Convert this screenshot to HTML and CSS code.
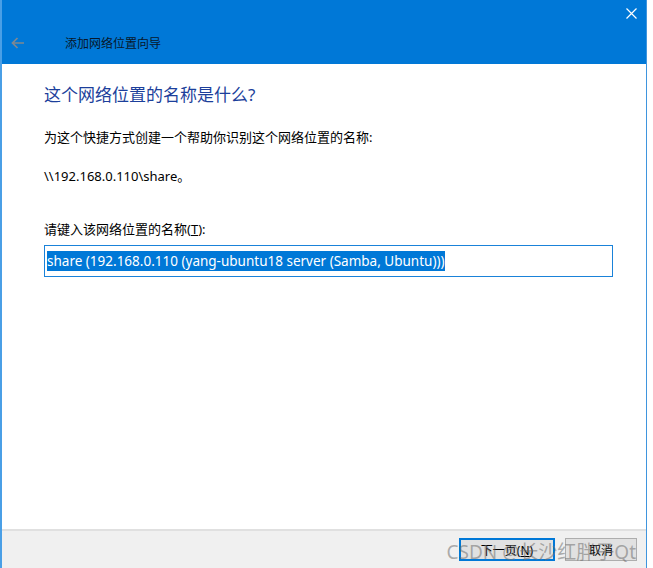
FILE: index.html
```html
<!DOCTYPE html>
<html lang="zh-CN">
<head>
  <meta charset="UTF-8" />
  <title>添加网络位置向导</title>
  <link rel="stylesheet" href="styles.css">
</head>
<body>
  <div class="window">
    <!-- title bar -->
    <header class="titlebar">
      <div class="titlebar-top">
        <svg class="close-icon" width="11" height="11" viewBox="0 0 11 11">
          <path d="M0.5 0.5 L10.5 10.5 M10.5 0.5 L0.5 10.5" stroke="#fff" stroke-width="1.2" fill="none"/>
        </svg>
      </div>
      <div class="titlebar-nav">
        <svg class="back-icon" width="14" height="12" viewBox="0 0 14 12">
          <path d="M13 6 H1.5 M6.5 1 L1.5 6 L6.5 11" stroke="#7f8890" stroke-width="1.7" fill="none"/>
        </svg>
        <span class="wizard-title">添加网络位置向导</span>
      </div>
    </header>

    <!-- content -->
    <main class="content">
      <h1 class="heading">这个网络位置的名称是什么?</h1>
      <p class="text">为这个快捷方式创建一个帮助你识别这个网络位置的名称:</p>
      <p class="text path">\\192.168.0.110\share。</p>
      <label class="text label">请键入该网络位置的名称(<u>T</u>):</label>
      <div class="name-input">
        <span class="selected">share (192.168.0.110 (yang-ubuntu18 server (Samba, Ubuntu)))</span>
      </div>
    </main>

    <!-- buttons -->
    <footer class="footer">
      <button class="btn btn-default">下一页(<u>N</u>)</button>
      <button class="btn">取消</button>
      <span class="watermark">CSDN @长沙红胖子Qt</span>
    </footer>
  </div>
</body>
</html>
```

FILE: styles.css
```css
body {
  margin: 0;
  background: #ffffff;
  font-family: "Noto Sans", "Noto Sans CJK SC", sans-serif;
  font-size: 13px;
  color: #000;
}

.window {
  width: 647px;
  height: 568px;
  display: flex;
  flex-direction: column;
  border-left: 2px solid #4a9fe6;
  border-right: 1px solid #3f95de;
  box-sizing: border-box;
}

.titlebar {
  background: #0078d7;
  height: 64px;
  display: flex;
  flex-direction: column;
}

.titlebar-top {
  height: 30px;
  display: flex;
  justify-content: flex-end;
  padding: 8px 9px 0 0;
  box-sizing: border-box;
}

.titlebar-nav {
  display: flex;
  align-items: center;
  height: 26px;
  padding-left: 9px;
}

.back-icon {
  margin-right: 40px;
}

.wizard-title {
  font-size: 12px;
  color: #08172a;
}

.content {
  flex: 1;
  padding: 19px 33px 0 42px;
}

.heading {
  margin: 0;
  font-size: 17px;
  font-weight: normal;
  color: #1c3f9b;
  line-height: 24px;
}

.text {
  margin: 0;
  line-height: 18px;
}

.heading + .text {
  margin-top: 21px;
}

.path {
  margin-top: 21px;
}

.label {
  display: block;
  margin-top: 35px;
}

.name-input {
  margin-top: 7px;
  height: 32px;
  border: 1px solid #1a82d9;
  box-sizing: border-box;
  padding: 3px 2px;
  display: flex;
  align-items: center;
}

.selected {
  background: #0078d7;
  color: #fff;
  font-size: 13.5px;
  line-height: 20px;
  white-space: nowrap;
}

.footer {
  position: relative;
  height: 39px;
  background: #f0f0f0;
  border-top: 2px solid #e0e0e0;
  display: flex;
  justify-content: flex-end;
  align-items: center;
  gap: 10px;
  padding-right: 9px;
  box-sizing: border-box;
}

.btn {
  height: 23px;
  width: 72px;
  background: #e1e1e1;
  border: 1px solid #adadad;
  font-family: inherit;
  font-size: 12px;
  padding: 0;
  color: #000;
}

.btn-default {
  width: 96px;
  border: 2px solid #0078d7;
}

.watermark {
  position: absolute;
  right: 10px;
  top: 6px;
  font-size: 19px;
  color: rgba(110, 110, 110, 0.55);
  white-space: nowrap;
  pointer-events: none;
}
```
